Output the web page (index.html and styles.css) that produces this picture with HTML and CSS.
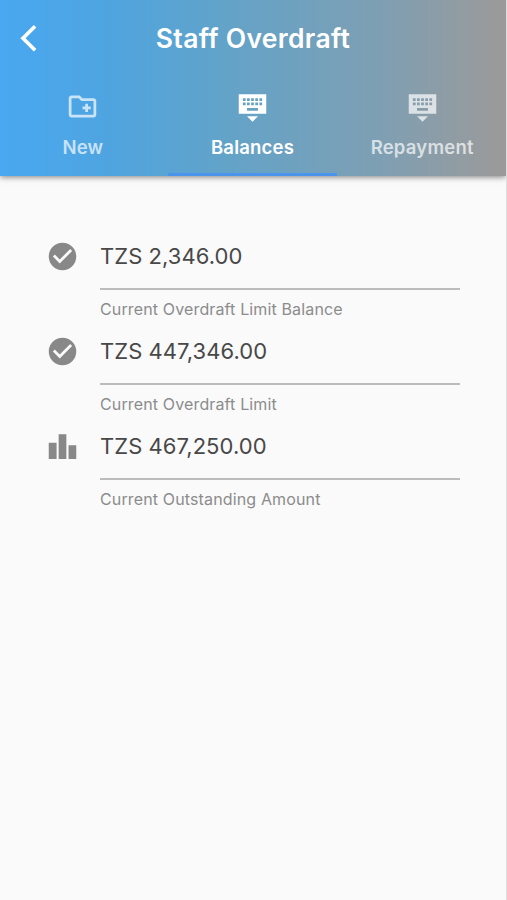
FILE: index.html
```html
<!DOCTYPE html>
<html lang="en">
<head>
  <meta charset="utf-8"/>
  <title>Staff Overdraft</title>
  <meta name="viewport" content="width=device-width, initial-scale=1"/>
  <link rel="stylesheet" href="styles.css">
</head>
<body>
  <header class="app-bar">
    <div class="title-row">
      <button class="back-btn" aria-label="Back">
        <svg width="18" height="28" viewBox="0 0 18 28"><path d="M15.1 2.2L3 14.2L15.1 26.2" fill="none" stroke="#fff" stroke-width="3.7"/></svg>
      </button>
      <h1>Staff Overdraft</h1>
    </div>
    <nav class="tabs">
      <a class="tab">
        <svg class="icon" viewBox="0 0 24 24"><path d="M20 6h-8l-2-2H4c-1.1 0-2 .9-2 2v12c0 1.100.9 2 2 2h16c1.100 0 2-.9 2-2V8c0-1.100-.9-2-2-2zm0 12H4V6h5.170l2 2H20v10zm-6-4h-2v-2h2v-2h2v2h2v2h-2v2h-2z"/></svg>
        <span>New</span>
      </a>
      <a class="tab active">
        <svg class="icon" viewBox="0 0 24 24"><path fill-rule="evenodd" d="M2 3h20v14.300H2zM5 6h2v2H5zM8 6h2v2H8zM11 6h2v2h-2zM14 6h2v2h-2zM17 6h2v2h-2zM5 9h2v2H5zM8 9h2v2H8zM11 9h2v2h-2zM14 9h2v2h-2zM17 9h2v2h-2zM8 13h8v2H8zM12 23l4-4H8z"/></svg>
        <span>Balances</span>
      </a>
      <a class="tab">
        <svg class="icon" viewBox="0 0 24 24"><path fill-rule="evenodd" d="M2 3h20v14.300H2zM5 6h2v2H5zM8 6h2v2H8zM11 6h2v2h-2zM14 6h2v2h-2zM17 6h2v2h-2zM5 9h2v2H5zM8 9h2v2H8zM11 9h2v2h-2zM14 9h2v2h-2zM17 9h2v2h-2zM8 13h8v2H8zM12 23l4-4H8z"/></svg>
        <span>Repayment</span>
      </a>
    </nav>
  </header>

  <main class="balances">
    <div class="balance">
      <svg class="icon" viewBox="0 0 24 24"><path d="M12 2a10 10 0 1 0 0 20a10 10 0 0 0 0-20zm-2 15l-5-5 1.410-1.410L10 14.170l7.590-7.590L19 8z"/></svg>
      <div class="field">
        <div class="amount">TZS 2,346.00</div>
        <div class="label">Current Overdraft Limit Balance</div>
      </div>
    </div>
    <div class="balance">
      <svg class="icon" viewBox="0 0 24 24"><path d="M12 2a10 10 0 1 0 0 20a10 10 0 0 0 0-20zm-2 15l-5-5 1.410-1.410L10 14.170l7.590-7.590L19 8z"/></svg>
      <div class="field">
        <div class="amount">TZS 447,346.00</div>
        <div class="label">Current Overdraft Limit</div>
      </div>
    </div>
    <div class="balance">
      <svg class="icon" viewBox="0 0 24 24"><path d="M2 9.200h5.700V21H2zM9.200 3h5.600v18H9.200zM16.400 11H22v10h-5.600z"/></svg>
      <div class="field">
        <div class="amount">TZS 467,250.00</div>
        <div class="label">Current Outstanding Amount</div>
      </div>
    </div>
  </main>
</body>
</html>
```
FILE: styles.css
```css
* {
  box-sizing: border-box;
}
body {
  margin: 0;
  min-height: 100vh;
  font-family: Inter, Roboto, sans-serif;
  background-color: #fafafa;
  border-right: 1px solid #dedede;
}
.app-bar {
  height: 176px;
  color: #fff;
  background: linear-gradient(90deg, #49a8f1, #4fa4df 22%, #63a3c8 45%, #7e9fb3 75%, #9c9a99);
  box-shadow: 0 1px 6px rgba(0,0,0,0.5);
}
.title-row {
  display: grid;
  grid-template-columns: 60px 1fr 60px;
  align-items: center;
  height: 76px;
}
.back-btn {
  display: flex;
  margin-left: 20px;
  padding: 0;
  border: none;
  background: none;
}
h1 {
  margin: 0;
  text-align: center;
  font-size: 26.500px;
  font-weight: 600;
  letter-spacing: 0.300px;
  white-space: nowrap;
}
.tabs {
  display: grid;
  grid-template-columns: 1fr 1fr 1fr;
  height: 100px;
  margin: 0 -1px 0 -2px;
}
.tab {
  display: flex;
  flex-direction: column;
  align-items: center;
  padding-top: 14px;
  color: rgba(255,255,255,0.7);
  border-bottom: 3px solid transparent;
  font-size: 18.500px;
  font-weight: 600;
  letter-spacing: 0.200px;
  line-height: 24px;
}
.tab.active {
  color: #fff;
  border-bottom-color: #4a94ec;
}
.tab span {
  margin-top: 12px;
}
.icon {
  display: block;
  flex: none;
  width: 33px;
  height: 33px;
  fill: currentColor;
}
.balances {
  padding: 57px 46px 0 46px;
}
.balance {
  display: flex;
  gap: 21px;
  height: 95px;
  padding-top: 7px;
  color: #888;
}
.field {
  flex: 1;
}
.amount {
  height: 50px;
  border-bottom: 2px solid #bbb;
  font-size: 22px;
  line-height: 33px;
  letter-spacing: 0.050px;
  color: #484848;
}
.label {
  margin-top: 8px;
  font-size: 16px;
  line-height: 22px;
  letter-spacing: 0.140px;
  color: #8c8c8c;
}
```
